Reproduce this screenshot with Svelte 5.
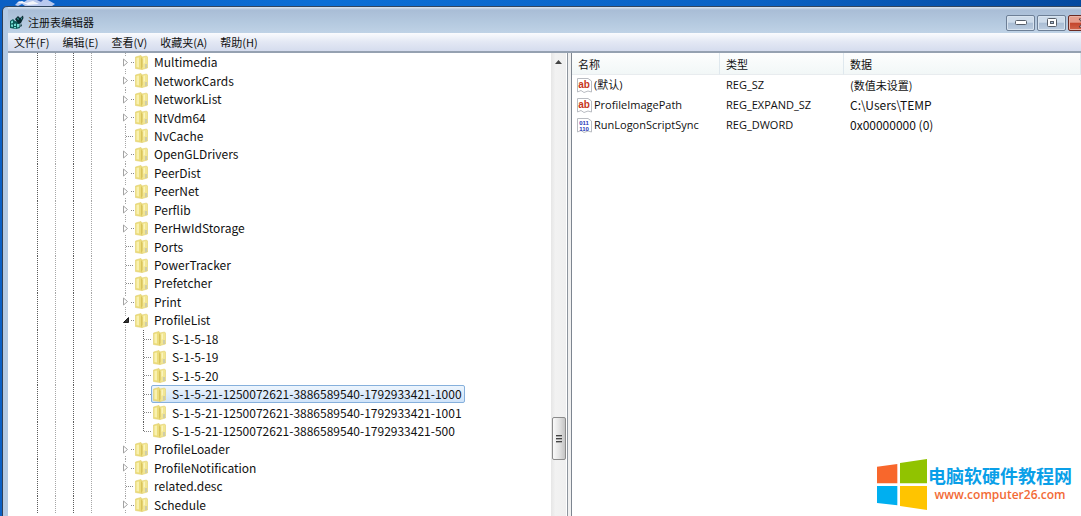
<script>
  const menus = ["文件(F)", "编辑(E)", "查看(V)", "收藏夹(A)", "帮助(H)"];

  const keys = [
    { name: "Multimedia", state: "closed" },
    { name: "NetworkCards", state: "closed" },
    { name: "NetworkList", state: "closed" },
    { name: "NtVdm64", state: "closed" },
    { name: "NvCache", state: "leaf" },
    { name: "OpenGLDrivers", state: "closed" },
    { name: "PeerDist", state: "closed" },
    { name: "PeerNet", state: "closed" },
    { name: "Perflib", state: "closed" },
    { name: "PerHwIdStorage", state: "closed" },
    { name: "Ports", state: "leaf" },
    { name: "PowerTracker", state: "leaf" },
    { name: "Prefetcher", state: "leaf" },
    { name: "Print", state: "closed" },
    { name: "ProfileList", state: "open" },
    { name: "S-1-5-18", child: true },
    { name: "S-1-5-19", child: true },
    { name: "S-1-5-20", child: true },
    { name: "S-1-5-21-1250072621-3886589540-1792933421-1000", child: true },
    { name: "S-1-5-21-1250072621-3886589540-1792933421-1001", child: true },
    { name: "S-1-5-21-1250072621-3886589540-1792933421-500", child: true, last: true },
    { name: "ProfileLoader", state: "closed" },
    { name: "ProfileNotification", state: "closed" },
    { name: "related.desc", state: "leaf" },
    { name: "Schedule", state: "closed" },
  ];

  const values = [
    { name: "(默认)", type: "REG_SZ", data: "(数值未设置)", text: true, cjk: true },
    { name: "ProfileImagePath", type: "REG_EXPAND_SZ", data: "C:\\Users\\TEMP", text: true },
    { name: "RunLogonScriptSync", type: "REG_DWORD", data: "0x00000000 (0)", text: false },
  ];

  let selected = $state("S-1-5-21-1250072621-3886589540-1792933421-1000");
</script>

<div class="desktop">
  <svg class="shortcut" width="44" height="6" viewBox="0 0 44 6" aria-hidden="true">
    <path d="M0 5 L4 1 L9 2 L12 0 H33 L40 4 L37 6 H10 L7 4 L3 6 Z" fill="#b9c9ee" />
    <path d="M2 3 L7 1 L11 3 L18 1 L24 4 L13 5 L8 3 Z" fill="#f4f6fb" />
    <path d="M22 0 H28 L26 2 Z" fill="#3d5fae" />
  </svg>

  <div class="window">
    <header class="titlebar">
      <svg width="15" height="15" viewBox="0 0 15 15" aria-hidden="true">
        <path d="M1 6 L4 4 L6 6 L10 7 L11 13 L7 14 L1 13 Z" fill="#0d5a58" />
        <path d="M2 6.5 L4 5.5 V8 L2 8.5 Z M2 9.5 H4 V12 L2 11.5 Z M5 9 L7 8.5 V11 H5 Z M5 12 H7 V13.5 L5 13 Z M8 9 H10 V12 L8 12.5 Z" fill="#74dcd2" />
        <path d="M6 4 L9 1 L11 3 L14 0.5 L14.5 3 L12 8 L10 9 L8 7 Z" fill="#0a2a30" />
        <path d="M8 4 L9 2.5 L10 5 Z M12 3 L13.5 2 L12 5 Z" fill="#49b3ad" />
        <path d="M12 8 L13 11 L11 12 Z" fill="#123c40" />
      </svg>
      <h1>注册表编辑器</h1>
      <div class="controls">
        <button aria-label="最小化">
          <svg width="12" height="5" viewBox="0 0 12 5"><rect x="0.5" y="0.5" width="11" height="4" rx="1" fill="#fff" stroke="#565e69" /></svg>
        </button>
        <button aria-label="最大化">
          <svg width="10" height="9" viewBox="0 0 10 9"><rect x="0.5" y="0.5" width="9" height="8" rx="1" fill="#fff" stroke="#565e69" /><rect x="3.5" y="3.5" width="3" height="2" fill="#a9bdd4" stroke="#565e69" /></svg>
        </button>
        <button class="close" aria-label="关闭">
          <svg width="13" height="10" viewBox="0 0 13 10"><path d="M1 1 H4 L6.5 3.5 L9 1 H12 L8.5 5 L12 9 H9 L6.5 6.5 L4 9 H1 L4.5 5 Z" fill="#fff" stroke="#5b3a3e" stroke-width="1" /></svg>
        </button>
      </div>
    </header>

    <nav class="menubar">
      {#each menus as menu}
        <button>{menu}</button>
      {/each}
    </nav>

    <main class="panes">
      <section class="tree-pane">
        <ul class="tree">
          {#each keys as key}
            <li>
              <span class="guide dark"></span>
              <span class="guide"></span>
              <span class="guide dark"></span>
              <span class="guide"></span>
              <span class="gap"></span>
              <span class="guide {key.state ?? ''}">
                {#if key.state === "closed"}
                  <svg width="6" height="9" viewBox="0 0 6 9" aria-hidden="true"><path d="M0.5 1 L4.5 4.5 L0.5 8 Z" fill="#fff" stroke="#a3a3a3" /></svg>
                {:else if key.state === "open"}
                  <svg width="6" height="6" viewBox="0 0 6 6" aria-hidden="true"><path d="M5.5 0.5 V5.5 H0.5 Z" fill="#333" stroke="#1c1c1c" /></svg>
                {/if}
              </span>
              {#if key.child}
                <span class="guide dark leaf" class:last={key.last}></span>
              {/if}
              <button class="key" class:selected={selected === key.name} onclick={() => (selected = key.name)}>
                <svg width="13" height="15" viewBox="0 0 13 15" aria-hidden="true">
                  <path d="M0.5 2 L6 0.5 L7 2 V14.5 L0.5 13.5 Z" fill="#ecdd7c" stroke="#e0cf6c" stroke-width="0.6" />
                  <path d="M7 2 L11.5 1 L12.5 2 V13 L7 14.5 Z" fill="#f2e692" stroke="#e0cf6c" stroke-width="0.6" />
                  <path d="M6 2.5 L7.5 4 V12 L6 14 Z" fill="#d9c35a" />
                  <path d="M1.5 3 L4 2.5 V12.5 L1.5 12 Z" fill="#f9f1b0" />
                  <path d="M8.5 3 L10 2.5 V8 L8.5 9 Z" fill="#faf4bd" />
                  <path d="M10 9 H12 V13 H10 Z" fill="#cfcda8" />
                </svg>
                <span>{key.name}</span>
              </button>
            </li>
          {/each}
        </ul>
        <div class="scrollbar">
          <svg class="up" width="7" height="4" viewBox="0 0 7 4" aria-hidden="true"><path d="M0 4 L3.5 0 L7 4 Z" fill="#444" /></svg>
          <div class="before"></div>
          <div class="thumb"><i></i><i></i><i></i></div>
          <div class="after"></div>
        </div>
      </section>

      <section class="list-pane">
        <table>
          <colgroup>
            <col class="col-name" />
            <col class="col-type" />
            <col />
          </colgroup>
          <thead>
            <tr><th>名称</th><th>类型</th><th>数据</th></tr>
          </thead>
          <tbody>
            {#each values as value}
              <tr class:cjk={value.cjk}>
                <td class="latin">
                  <div class="name">
                    <svg class="kind" width="15" height="15" viewBox="0 0 15 15" aria-hidden="true">
                      <path d="M0.5 0.5 H11 L14.5 3 V14 L11 13 L7 14.5 L4 12.5 L0.5 14 Z" fill="#fff" stroke="#b9bcc2" />
                      {#if value.text}
                        <text x="7" y="10" text-anchor="middle" font-size="10" fill="#c8371c">ab</text>
                      {:else}
                        <text x="7" y="7" text-anchor="middle" font-size="6" fill="#1d36b8">011</text>
                        <text x="7" y="13" text-anchor="middle" font-size="6" fill="#1d36b8">110</text>
                      {/if}
                    </svg>
                    {value.name}
                  </div>
                </td>
                <td class="latin">{value.type}</td>
                <td>{value.data}</td>
              </tr>
            {/each}
          </tbody>
        </table>
      </section>
    </main>
  </div>

  <aside class="brand">
    <svg width="50" height="51" viewBox="0 0 150 153" aria-hidden="true">
      <path d="M0 23 L61 15 V73 H0 Z" fill="#f8672c" />
      <path d="M69 12 L150 0 V73 H69 Z" fill="#91c300" />
      <path d="M0 81 H61 V139 L0 132 Z" fill="#00aff0" />
      <path d="M69 81 H150 V153 L69 141 Z" fill="#ffc400" />
    </svg>
    <div>
      <strong>电脑软硬件教程网</strong>
      <a href="http://www.computer26.com">www.computer26.com</a>
    </div>
  </aside>
</div>

<style>
  :global(body) {
    margin: 0;
  }

  .desktop {
    position: relative;
    display: flex;
    flex-direction: column;
    box-sizing: border-box;
    min-height: 100vh;
    padding: 6px 0 0 2px;
    overflow: hidden;
    background: linear-gradient(90deg, #0a5fc4, #0b6fd6 30%, #0a62c4 70%, #04499f);
    font-family: "Noto Sans CJK SC", "Open Sans", sans-serif;
    font-size: 12px;
    color: #111;
  }

  .shortcut {
    position: absolute;
    top: 0;
    left: 15px;
  }

  button {
    margin: 0;
    padding: 0;
    border: 0;
    background: none;
    font: inherit;
    color: inherit;
  }

  .window {
    flex: 1;
    display: flex;
    flex-direction: column;
    box-sizing: border-box;
    padding-left: 5px;
    border-top: 1px solid #33465e;
    border-left: 1px solid #2e3f57;
    border-top-left-radius: 5px;
    background: #b3cae4;
  }

  .titlebar {
    display: flex;
    align-items: center;
    gap: 4px;
    height: 26px;
    overflow: hidden;
    background: linear-gradient(#dce7f2, #a9bdd6 3px, #b4c9df 60%, #bfd2e6);
  }

  h1 {
    flex: 1;
    margin: 4px 0 0;
    font-size: 11px;
    font-weight: 400;
  }

  .titlebar > svg {
    margin: 4px 0 0 1px;
  }

  .controls {
    display: flex;
    gap: 2px;
    margin: 5px -20px 0 0;
  }

  .controls button {
    display: grid;
    place-items: center;
    width: 29px;
    height: 16px;
    border: 1px solid #6d7f96;
    border-radius: 2px;
    background: linear-gradient(#cddbea 45%, #a9bdd4 50%, #bccde0);
    box-shadow: inset 0 0 0 1px #d7e3ef;
  }

  .controls .close {
    width: 33px;
    border-color: #6b2a22;
    background: linear-gradient(#e59c8b 45%, #c4452c 50%, #d1654b);
    box-shadow: inset 0 0 0 1px #e9b3a6;
  }

  .menubar {
    display: flex;
    gap: 13px;
    height: 18px;
    padding: 0 6px;
    border-bottom: 2px solid #95a1b1;
    background: linear-gradient(#fafbfe, #e3e8f4 50%, #d5dcee);
    font-size: 11px;
    line-height: 16px;
  }

  .panes {
    flex: 1;
    display: flex;
    background: #f0f0f0;
  }

  .tree-pane {
    display: flex;
    flex: 0 0 560px;
    box-sizing: border-box;
    padding-right: 1px;
    border-right: 1px solid #8e959e;
    background: #fff;
  }

  .tree {
    flex: 1;
    display: flex;
    flex-direction: column;
    margin: 0;
    padding: 0 0 2px 21px;
    list-style: none;
  }

  li {
    flex: 1;
    display: flex;
    min-height: 18px;
  }

  .guide {
    --dot: #a6a6a6;

    position: relative;
    display: flex;
    align-items: center;
    width: 18px;
    background: repeating-linear-gradient(var(--dot) 0 1px, transparent 1px 2px) 8px 0 / 1px 100% no-repeat;
  }

  .dark {
    --dot: #5c5c5c;
  }

  .gap {
    width: 16px;
  }

  .guide svg {
    padding: 1px 0;
    margin-left: 6px;
    background: #fff;
  }

  /* horizontal stub from the guide line to the folder */
  .leaf::after,
  .closed::after,
  .open::after {
    content: "";
    position: absolute;
    top: 9px;
    left: 9px;
    right: 1px;
    height: 1px;
    background: repeating-linear-gradient(90deg, #8a8a8a 0 1px, transparent 1px 2px);
  }

  .closed::after,
  .open::after {
    left: 14px;
  }

  .last {
    background-size: 1px 50%;
  }

  .key {
    display: flex;
    align-items: center;
    gap: 6px;
    box-sizing: border-box;
    margin-left: -2px;
    padding: 0 2px 0 1px;
    border: 1px solid transparent;
    border-radius: 2px;
    line-height: 16px;
    white-space: nowrap;
  }

  .selected {
    border-color: #86b0dc;
    background: linear-gradient(#edf5fd, #cfe3f9);
  }

  .scrollbar {
    display: flex;
    flex-direction: column;
    align-items: center;
    width: 15px;
    background: linear-gradient(90deg, #e6e6e6, #f2f2f2 30%, #efefef);
  }

  .up {
    margin-top: 7px;
  }

  .before {
    flex: 353;
  }

  .after {
    flex: 56;
  }

  .thumb {
    display: flex;
    flex-direction: column;
    justify-content: center;
    align-items: center;
    gap: 1px;
    box-sizing: border-box;
    width: 14px;
    height: 43px;
    border: 1px solid #8b8b8b;
    border-radius: 2px;
    background: linear-gradient(90deg, #fafafa, #e4e4e4 50%, #c4c4c4);
  }

  .thumb i {
    width: 6px;
    height: 2px;
    background: linear-gradient(#444 50%, #aaa 50%);
  }

  .list-pane {
    flex: 1;
    margin-left: 3px;
    border-left: 1px solid #7d8590;
    background: #fff;
  }

  table {
    width: 100%;
    table-layout: fixed;
    border-collapse: separate;
    border-spacing: 0;
  }

  .col-name {
    width: 148px;
  }

  .col-type {
    width: 124px;
  }

  th {
    height: 22px;
    padding: 0 6px;
    border-right: 1px solid #dfe8ee;
    border-bottom: 1px solid #e8ecef;
    box-sizing: border-box;
    background: linear-gradient(#fdfefe, #f2f7f7);
    font-size: 11px;
    font-weight: 400;
    line-height: 16px;
    text-align: left;
  }

  td {
    height: 20px;
    padding: 0 6px;
    line-height: 16px;
    white-space: nowrap;
  }

  td:first-child {
    padding: 0 0 0 5px;
  }

  .latin {
    font-family: "Open Sans", "Noto Sans CJK SC", sans-serif;
    font-size: 11px;
  }

  .cjk td {
    font-size: 11px;
  }

  .name {
    display: flex;
    align-items: center;
    gap: 2px;
  }

  .kind {
    overflow: visible;
    font-family: "Liberation Sans", sans-serif;
    font-weight: 700;
  }

  .brand {
    position: absolute;
    right: 9px;
    bottom: 6px;
    display: flex;
    align-items: center;
    gap: 1px;
  }

  .brand div {
    display: flex;
    flex-direction: column;
    align-items: center;
  }

  .brand strong {
    font-size: 18px;
    line-height: 20px;
    color: #0a9fe8;
  }

  .brand a {
    font-family: "Open Sans", sans-serif;
    font-size: 12px;
    font-weight: 600;
    line-height: 20px;
    color: #f26a35;
    text-decoration: none;
  }
</style>
